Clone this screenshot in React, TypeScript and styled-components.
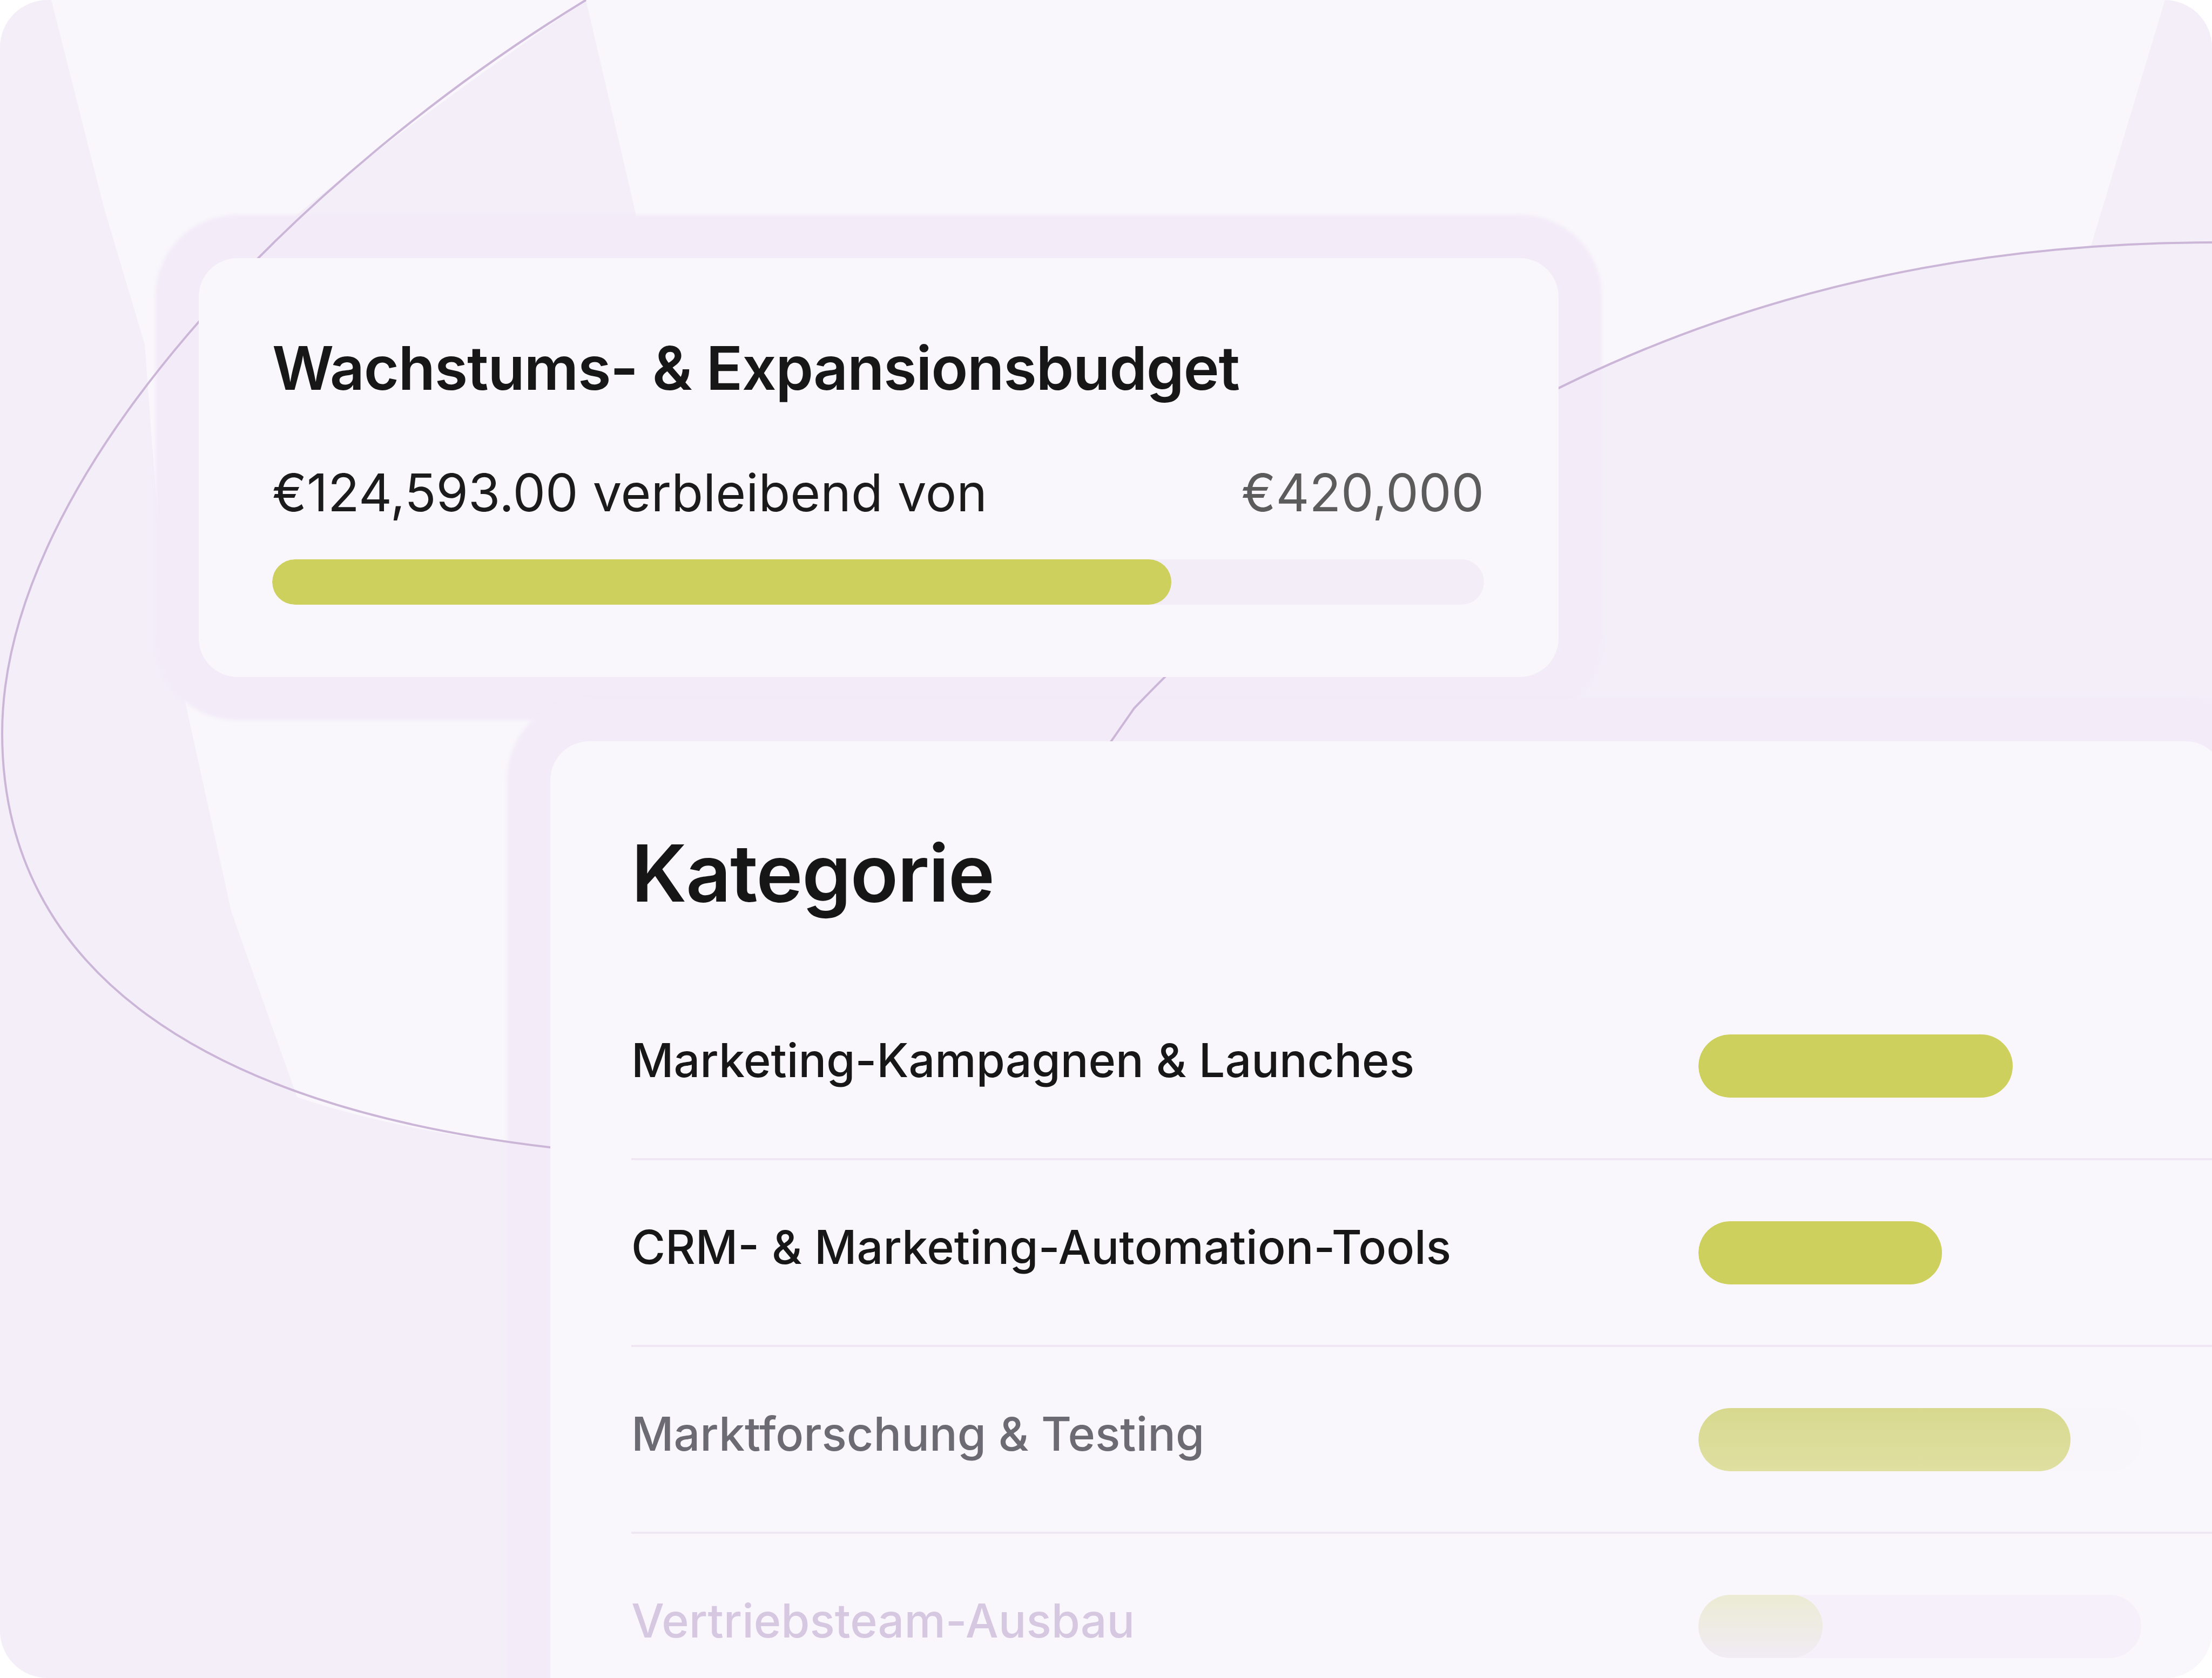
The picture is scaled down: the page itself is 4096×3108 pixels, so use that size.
import React from 'react';
import styled, { createGlobalStyle } from 'styled-components';

type Tone = 'solid' | 'muted' | 'ghost';

const tones: Record<Tone, { text: string; fill: string; track: string }> = {
  solid: { text: '#171717', fill: '#cdd05c', track: '#f9f7fc' },
  muted: { text: '#6c6a72', fill: 'linear-gradient(180deg, #d8d98f 0%, #dfe0a1 100%)', track: '#f8f5fb' },
  ghost: { text: '#d7c8e2', fill: 'linear-gradient(180deg, #ecebd3 0%, #f1ebf5 100%)', track: '#f5f0f9' },
};

const categories: { label: string; share: number; tone: Tone }[] = [
  { label: 'Marketing-Kampagnen & Launches', share: 71, tone: 'solid' },
  { label: 'CRM- & Marketing-Automation-Tools', share: 55, tone: 'solid' },
  { label: 'Marktforschung & Testing', share: 84, tone: 'muted' },
  { label: 'Vertriebsteam-Ausbau', share: 28, tone: 'ghost' },
];

const GlobalStyle = createGlobalStyle`
  html, body {
    margin: 0;
    padding: 0;
    background: #ffffff;
  }
  body {
    font-family: Inter, "Noto Sans", "Liberation Sans", sans-serif;
    -webkit-font-smoothing: antialiased;
  }
`;

const Frame = styled.main`
  position: relative;
  isolation: isolate;
  width: 4096px;
  height: 3108px;
  box-sizing: border-box;
  padding-top: 478px;
  border-radius: 88px;
  overflow: hidden;
  background: #f9f7fc;
  display: flex;
  flex-direction: column;
  align-items: flex-start;
`;

const Backdrop = styled.svg`
  position: absolute;
  inset: 0;
  width: 100%;
  height: 100%;
  z-index: 0;
`;

const Orbit = styled.svg`
  position: absolute;
  inset: 0;
  width: 100%;
  height: 100%;
  z-index: 2;
  pointer-events: none;
`;

/* soft lavender ring behind each card, kept under the orbit line */
const Halo = styled.div<{ $left: number; $top?: number }>`
  position: relative;
  margin-left: ${(p) => p.$left}px;
  margin-top: ${(p) => p.$top ?? 0}px;
  flex-shrink: 0;

  &::before {
    content: '';
    position: absolute;
    inset: -80px;
    border-radius: 150px;
    background: #f3ebf8;
    filter: blur(3px);
    z-index: 1;
  }
`;

const Panel = styled.section<{ $width: number }>`
  position: relative;
  z-index: 3;
  width: ${(p) => p.$width}px;
  box-sizing: border-box;
  border-radius: 72px;
  background: #f9f7fc;
`;

const BudgetBody = styled.div`
  padding: 136px 138px 134px 136px;
`;

const BudgetTitle = styled.h2`
  margin: 0;
  font-size: 112px;
  line-height: 1.2;
  font-weight: 600;
  letter-spacing: -0.012em;
  color: #171717;
`;

const AmountRow = styled.div`
  margin-top: 107px;
  display: flex;
  justify-content: space-between;
  align-items: baseline;
  font-size: 96px;
  line-height: 1.2;
`;

const Remaining = styled.span`
  color: #1b1b1b;
  font-weight: 400;
`;

const Total = styled.span`
  color: #5c5c5c;
  font-weight: 400;
`;

const Track = styled.div<{ $height: number; $color: string }>`
  height: ${(p) => p.$height}px;
  border-radius: ${(p) => p.$height / 2}px;
  background: ${(p) => p.$color};
  overflow: hidden;
`;

const BudgetTrack = styled(Track)`
  margin-top: 65px;
`;

const Fill = styled.div<{ $paint: string }>`
  height: 100%;
  border-radius: inherit;
  background: ${(p) => p.$paint};
`;

const CategoryBody = styled.div`
  padding: 157px 0 0 150px;
`;

const CategoryTitle = styled.h2`
  margin: 0 0 98px;
  font-size: 146px;
  line-height: 1.2;
  font-weight: 600;
  letter-spacing: -0.012em;
  color: #161616;
`;

const CategoryList = styled.ul`
  list-style: none;
  margin: 0;
  padding: 0;
`;

const CategoryRow = styled.li`
  display: grid;
  grid-template-columns: 1fr 820px;
  align-items: center;
  padding: 113px 154px 112px 0;
  border-bottom: 4px solid #efe8f4;
`;

const CategoryLabel = styled.span<{ $color: string }>`
  margin-top: -20px;
  font-size: 86px;
  line-height: 117px;
  font-weight: 500;
  color: ${(p) => p.$color};
`;

const ORBIT =
  'M1085 0 C560 320 4 880 4 1358 C4 1800 380 2050 1018 2125 C1500 2180 1900 1600 2100 1312 C2400 1000 3000 450 4096 449';

const App: React.FC = () => {
  const total = 420000;
  const used = 74.2;

  return (
    <>
      <GlobalStyle />
      <Frame>
        <Backdrop viewBox="0 0 4096 3108" preserveAspectRatio="none">
          <path
            d="M0 0 L95 0 L192 383 L268 638 L295 1000 L321 1200 L428 1687 L550 2032 Q746 2098 1018 2125 L1100 2125 L1100 3108 L0 3108 Z"
            fill="#f4eef9"
          />
          <path d="M1085 0 L1195 472 L464 472 Q653 300 1085 0 Z" fill="#f4eef9" />
          <path d="M2100 1312 C2400 1000 3000 450 4096 449 L4096 1420 L2100 1420 Z" fill="#f4eef9" />
          <path d="M4009 0 L4096 0 L4096 462 L3870 462 Z" fill="#f4eef9" />
        </Backdrop>
        <Orbit viewBox="0 0 4096 3108" preserveAspectRatio="none">
          <path d={ORBIT} fill="none" stroke="#cbb6d8" strokeWidth={4} />
        </Orbit>

        <Halo $left={368}>
          <Panel $width={2518}>
            <BudgetBody>
              <BudgetTitle>Wachstums- &amp; Expansionsbudget</BudgetTitle>
              <AmountRow>
                <Remaining>€124,593.00 verbleibend von</Remaining>
                <Total>€{total.toLocaleString('en-US')}</Total>
              </AmountRow>
              <BudgetTrack $height={84} $color="#f3edf7">
                <Fill $paint="#cdd05c" style={{ width: `${used}%` }} />
              </BudgetTrack>
            </BudgetBody>
          </Panel>
        </Halo>

        <Halo $left={1019} $top={119}>
          <Panel $width={3100}>
            <CategoryBody>
              <CategoryTitle>Kategorie</CategoryTitle>
              <CategoryList>
                {categories.map((c) => (
                  <CategoryRow key={c.label}>
                    <CategoryLabel $color={tones[c.tone].text}>{c.label}</CategoryLabel>
                    <Track $height={117} $color={tones[c.tone].track}>
                      <Fill $paint={tones[c.tone].fill} style={{ width: `${c.share}%` }} />
                    </Track>
                  </CategoryRow>
                ))}
              </CategoryList>
            </CategoryBody>
          </Panel>
        </Halo>
      </Frame>
    </>
  );
};

export default App;
